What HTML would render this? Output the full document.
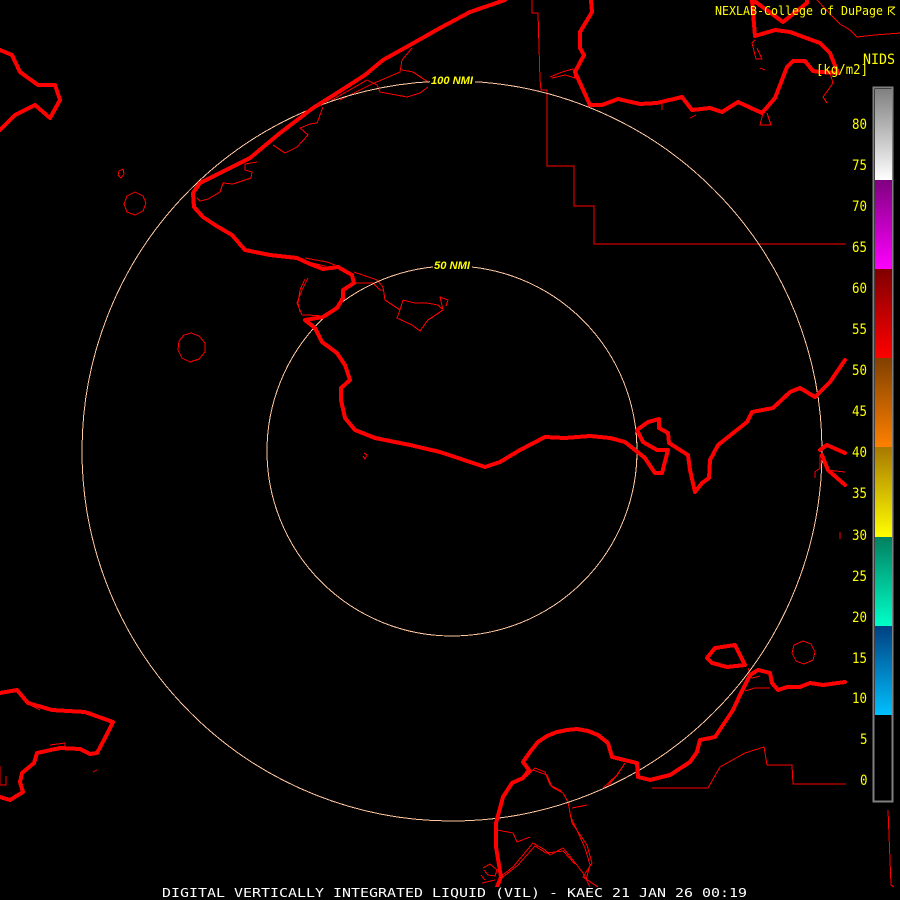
<!DOCTYPE html>
<html>
<head>
<meta charset="utf-8">
<style>
html,body{margin:0;padding:0;background:#000;width:900px;height:900px;overflow:hidden}
svg{display:block}
text{font-family:"DejaVu Sans Mono","Liberation Mono",monospace;fill:#ffff00}
.t{fill:none;stroke:#f00;stroke-width:4;stroke-linejoin:round;stroke-linecap:round;shape-rendering:crispEdges}
.n{fill:none;stroke:#f00;stroke-width:1;shape-rendering:crispEdges}
.r{fill:none;stroke:#ffc8a0;stroke-width:1;shape-rendering:crispEdges}
.l{font-size:14px}
</style>
</head>
<body>
<svg width="900" height="900" viewBox="0 0 900 900" xmlns="http://www.w3.org/2000/svg">
<defs>
<linearGradient id="g1" x1="0" y1="0" x2="0" y2="1"><stop offset="0" stop-color="#808080"/><stop offset="1" stop-color="#fff"/></linearGradient>
<linearGradient id="g2" x1="0" y1="0" x2="0" y2="1"><stop offset="0" stop-color="#800080"/><stop offset="1" stop-color="#f0f"/></linearGradient>
<linearGradient id="g3" x1="0" y1="0" x2="0" y2="1"><stop offset="0" stop-color="#800000"/><stop offset="1" stop-color="#f00"/></linearGradient>
<linearGradient id="g4" x1="0" y1="0" x2="0" y2="1"><stop offset="0" stop-color="#804000"/><stop offset="1" stop-color="#ff8000"/></linearGradient>
<linearGradient id="g5" x1="0" y1="0" x2="0" y2="1"><stop offset="0" stop-color="#a87800"/><stop offset="1" stop-color="#ff0"/></linearGradient>
<linearGradient id="g6" x1="0" y1="0" x2="0" y2="1"><stop offset="0" stop-color="#008060"/><stop offset="1" stop-color="#00ffc8"/></linearGradient>
<linearGradient id="g7" x1="0" y1="0" x2="0" y2="1"><stop offset="0" stop-color="#004080"/><stop offset="1" stop-color="#00c0ff"/></linearGradient>
</defs>
<rect width="900" height="900" fill="#000"/>

<!-- thin county/shore detail -->
<g class="n">
<path d="M532 0V13H538L540 80L541 90H547V166H574V206H594V244H846"/>
<path d="M652 788H708L720 767L745 753L764 747L767 765H792L793 784H846"/>
<path d="M888 810L891 885L894 887"/>
<path d="M197 198L200 201L208 199L220 192L223 183L233 184L251 178L252 172L245 170L245 164L257 162"/>
<path d="M273 145L285 153L297 147L308 135L300 128L310 124L317 123L323 107"/>
<path d="M332 100L367 80L377 85L380 92L407 97L420 93L428 87"/>
<path d="M340 100L372 84L400 72L402 60L412 48M402 70L413 72L428 82"/>
<path d="M308 278L302 290L297 303L302 315M305 279L300 290L298 303L300 312M302 315L307 315L323 316L332 310"/>
<path d="M305 258L327 262L335 265M308 262L325 266"/>
<path d="M354 272L377 280L383 287L385 300L400 310L397 318L412 325L420 331L428 320L443 310L440 297L448 300L446 306M403 300L415 303L427 303L438 305L442 309"/>
<path d="M355 283L373 283L380 290L384 290M400 310L403 300"/>
<path d="M523 778L533 770L547 775L552 787L563 793L568 802M526 777L535 768L545 772L550 785L562 791"/>
<path d="M568 802L572 823L587 845L592 863L583 877L598 887M572 808L587 805M570 815L585 848L590 865L586 880"/>
<path d="M497 830L513 833L517 842L530 837"/>
<path d="M500 877L513 867L533 843L545 850L550 855L563 848L573 860L583 873L590 887M503 877L518 865L535 846L546 853L563 851L575 864"/>
<path d="M603 788L617 775L625 763M606 788L619 773"/>
<path d="M482 883L495 880M483 868L490 864L497 870L495 876L488 875L484 870M481 875L485 880"/>
<path d="M550 77L562 72L573 69L575 78L565 75L552 78"/>
<path d="M817 0L833 17L840 24L850 30L857 37L875 35L900 33"/>
<path d="M755 40L752 43L756 59H762L757 48M760 68L765 70M830 73L833 83L823 97L827 103"/>
<path d="M775 100L763 113L760 125H771L767 113"/>
<path d="M820 455V468L815 472V478M826 470L845 472"/>
<path d="M748 668L752 678L760 676M745 691L755 688L770 688"/>
<path d="M696 115L690 118M662 102V110"/>
<path d="M135 192L143 196L146 203L143 211L135 215L127 212L124 204L127 196Z"/>
<path d="M191 333L199 336L205 343L205 352L199 359L190 362L182 358L178 350L179 341L184 335Z"/>
<path d="M803 641L811 644L815 652L813 660L804 664L796 661L792 653L794 645Z"/>
<path d="M119 171L123 169L124 174L121 178L118 175Z"/>
<path d="M364 453L367 455L365 459L363 456"/>
<path d="M840 532V539"/>
<path d="M97 770L93 772"/>
<path d="M50 745L65 743L65 748M0 766V785L6 785V776"/>
<path d="M30 705L40 710"/>
</g>

<!-- range rings -->
<circle class="r" cx="452" cy="451" r="370"/>
<circle class="r" cx="452" cy="451" r="185"/>

<!-- thick coast -->
<g class="t">
<path d="M505 0L470 12L440 28L410 45L383 60L365 75L337 93L313 108L280 133L250 158L220 173L200 183L193 193L194 207L203 217L215 225L232 235L245 250L270 255L297 258L310 264L323 269L338 267L352 275L354 283L343 290L343 298L337 308L323 317L305 320L315 328L322 342L337 353L345 365L350 380L341 388L341 400L345 418L355 430L375 438L410 445L440 452L470 462L485 467L500 462L520 450L545 437L565 438L590 436L610 438L625 442L635 450L645 458L655 473L662 473L668 450L657 450L643 442L637 430L648 422L659 419L659 428L668 433L669 443L688 455L690 470L695 492L702 483L709 478L710 460L718 445L747 422L752 412L773 408L790 392L800 388L815 397L830 382L845 360"/>
<path d="M820 450L827 445L845 453M822 455L828 470L845 485"/>
<path d="M591 0L592 12L580 32L580 48L584 55L575 72L590 105L602 105L618 99L640 104L657 103L682 97L692 110L710 108L722 112L738 102L762 113L775 98L787 67L793 61L805 61L813 71L820 72L838 73L830 53L820 43L790 32L775 30L755 36L752 0"/>
<path d="M753 0L783 22L807 3V0"/>
<path d="M0 50L12 55L20 72L38 85L55 85L60 100L50 118L35 105L15 115L0 130"/>
<path d="M0 693L17 690L28 703L52 710L85 712L113 722L105 738L97 753L90 754L80 749L60 748L37 753L34 763L22 773L20 782L23 792L10 800L0 797"/>
<path d="M497 887L501 877L496 847L496 823L503 797L512 783L523 778L529 770L523 762L530 752L538 742L547 736L557 732L567 730L577 729L588 731L598 735L608 743L612 757L637 763L638 777L650 780L670 775L690 762L697 752L700 740L715 737L733 710L740 695L750 675L758 670L770 673L772 683L778 690L787 687L800 687L810 683L823 685L845 682"/>
<path d="M707 658L715 648L735 645L745 665L727 667L712 663Z"/>
</g>

<!-- ring labels -->
<rect x="430" y="74" width="45" height="12" fill="#000"/>
<rect x="433" y="260" width="39" height="12" fill="#000"/>
<text x="431" y="84" font-size="11" font-weight="bold" font-style="italic" textLength="42" lengthAdjust="spacingAndGlyphs" style="font-family:'Liberation Sans',sans-serif">100 NMI</text>
<text x="434" y="269" font-size="11" font-weight="bold" font-style="italic" textLength="36" lengthAdjust="spacingAndGlyphs" style="font-family:'Liberation Sans',sans-serif">50 NMI</text>

<!-- header text -->
<text x="715" y="15" font-size="12" textLength="168" lengthAdjust="spacingAndGlyphs">NEXLAB-College of DuPage</text>
<path d="M888.5 7H895M888.5 7V15M895 7L890 11L895 15" fill="none" stroke="#ff0" stroke-width="1"/>
<text x="863" y="64" font-size="14" textLength="32" lengthAdjust="spacingAndGlyphs">NIDS</text>
<text x="816" y="74" font-size="13" textLength="52" lengthAdjust="spacingAndGlyphs">[kg/m2]</text>

<!-- colorbar -->
<rect x="873.5" y="87.5" width="19" height="714" fill="#000" stroke="#808080" stroke-width="2"/>
<rect x="875" y="89" width="17" height="91" fill="url(#g1)"/>
<rect x="875" y="180" width="17" height="89" fill="url(#g2)"/>
<rect x="875" y="269" width="17" height="89" fill="url(#g3)"/>
<rect x="875" y="358" width="17" height="89" fill="url(#g4)"/>
<rect x="875" y="447" width="17" height="90" fill="url(#g5)"/>
<rect x="875" y="537" width="17" height="89" fill="url(#g6)"/>
<rect x="875" y="626" width="17" height="89" fill="url(#g7)"/>

<!-- colorbar labels -->
<g class="l">
<text x="852" y="129" textLength="15" lengthAdjust="spacingAndGlyphs">80</text>
<text x="852" y="170" textLength="15" lengthAdjust="spacingAndGlyphs">75</text>
<text x="852" y="211" textLength="15" lengthAdjust="spacingAndGlyphs">70</text>
<text x="852" y="252" textLength="15" lengthAdjust="spacingAndGlyphs">65</text>
<text x="852" y="293" textLength="15" lengthAdjust="spacingAndGlyphs">60</text>
<text x="852" y="334" textLength="15" lengthAdjust="spacingAndGlyphs">55</text>
<text x="852" y="375" textLength="15" lengthAdjust="spacingAndGlyphs">50</text>
<text x="852" y="416" textLength="15" lengthAdjust="spacingAndGlyphs">45</text>
<text x="852" y="457" textLength="15" lengthAdjust="spacingAndGlyphs">40</text>
<text x="852" y="498" textLength="15" lengthAdjust="spacingAndGlyphs">35</text>
<text x="852" y="540" textLength="15" lengthAdjust="spacingAndGlyphs">30</text>
<text x="852" y="581" textLength="15" lengthAdjust="spacingAndGlyphs">25</text>
<text x="852" y="622" textLength="15" lengthAdjust="spacingAndGlyphs">20</text>
<text x="852" y="663" textLength="15" lengthAdjust="spacingAndGlyphs">15</text>
<text x="852" y="703" textLength="15" lengthAdjust="spacingAndGlyphs">10</text>
<text x="860" y="744" textLength="7.5" lengthAdjust="spacingAndGlyphs">5</text>
<text x="860" y="785" textLength="7.5" lengthAdjust="spacingAndGlyphs">0</text>
</g>

<!-- footer -->
<rect x="160" y="887" width="590" height="13" fill="#000"/>
<text x="162" y="897" font-size="12" style="fill:#fff" textLength="585" lengthAdjust="spacingAndGlyphs">DIGITAL VERTICALLY INTEGRATED LIQUID (VIL) - KAEC 21 JAN 26 00:19</text>
</svg>
</body>
</html>
